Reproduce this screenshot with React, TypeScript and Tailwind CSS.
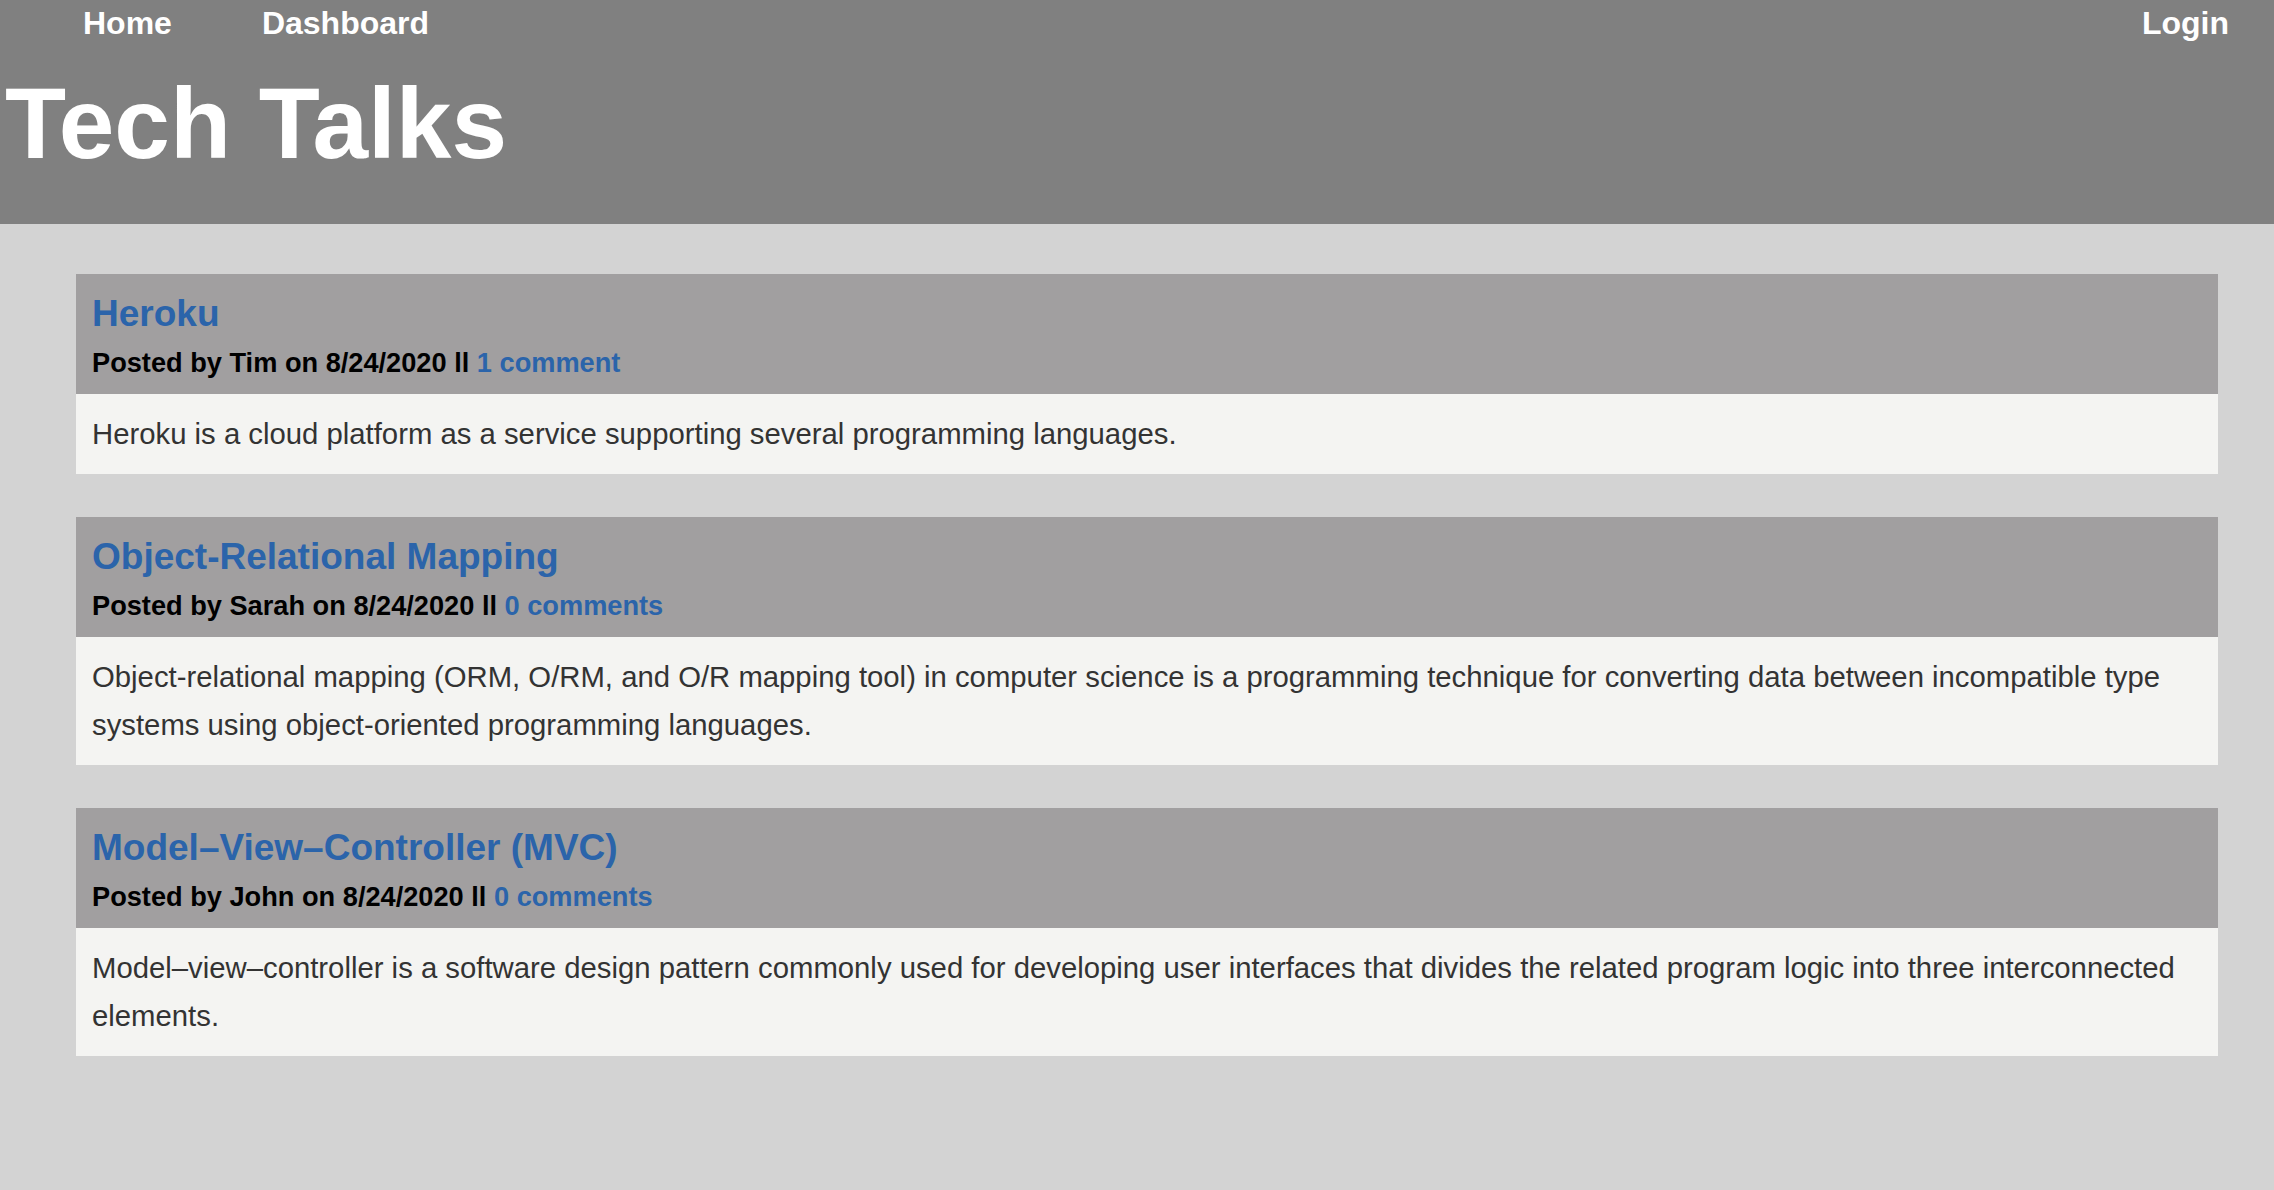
import React from "react";

type Post = {
  title: string;
  author: string;
  date: string;
  comments: string;
  body: string;
};

const posts: Post[] = [
  {
    title: "Heroku",
    author: "Tim",
    date: "8/24/2020",
    comments: "1 comment",
    body: "Heroku is a cloud platform as a service supporting several programming languages.",
  },
  {
    title: "Object-Relational Mapping",
    author: "Sarah",
    date: "8/24/2020",
    comments: "0 comments",
    body: "Object-relational mapping (ORM, O/RM, and O/R mapping tool) in computer science is a programming technique for converting data between incompatible type systems using object-oriented programming languages.",
  },
  {
    title: "Model–View–Controller (MVC)",
    author: "John",
    date: "8/24/2020",
    comments: "0 comments",
    body: "Model–view–controller is a software design pattern commonly used for developing user interfaces that divides the related program logic into three interconnected elements.",
  },
];

function PostCard({ post }: { post: Post }) {
  return (
    <article className="flex flex-col">
      <div className="bg-[#a19fa0] px-4 pt-[19px] pb-[15px]">
        <h2 className="text-[37px] leading-[42px] font-bold text-[#2b64aa]">
          <a href="#">{post.title}</a>
        </h2>
        <p className="mt-[12px] text-[27.2px] leading-[32px] font-bold text-black">
          Posted by {post.author} on {post.date} ll{" "}
          <a href="#" className="text-[#2b64aa]">
            {post.comments}
          </a>
        </p>
      </div>
      <div className="bg-[#f4f4f2] px-4 py-4">
        <p className="text-[29.3px] leading-[48px] text-[#333333]">{post.body}</p>
      </div>
    </article>
  );
}

export default function App() {
  return (
    <div
      className="min-h-screen w-full bg-[#d3d3d3]"
      style={{ fontFamily: '"Liberation Sans", Arial, sans-serif' }}
    >
      <header className="bg-[#808080] text-white pb-[51px]">
        <nav className="flex justify-between pt-[5px] text-[32px] leading-[36px] font-bold">
          <div className="flex gap-[90px] pl-[83px]">
            <a href="#">Home</a>
            <a href="#">Dashboard</a>
          </div>
          <a href="#" className="pr-[45px]">
            Login
          </a>
        </nav>
        <h1 className="mt-[32px] pl-[5px] text-[100px] leading-[100px] font-bold">
          Tech Talks
        </h1>
      </header>
      <main className="flex flex-col gap-[43px] pt-[50px] pl-[76px] pr-[56px] pb-10">
        {posts.map((p) => (
          <PostCard key={p.title} post={p} />
        ))}
      </main>
    </div>
  );
}
